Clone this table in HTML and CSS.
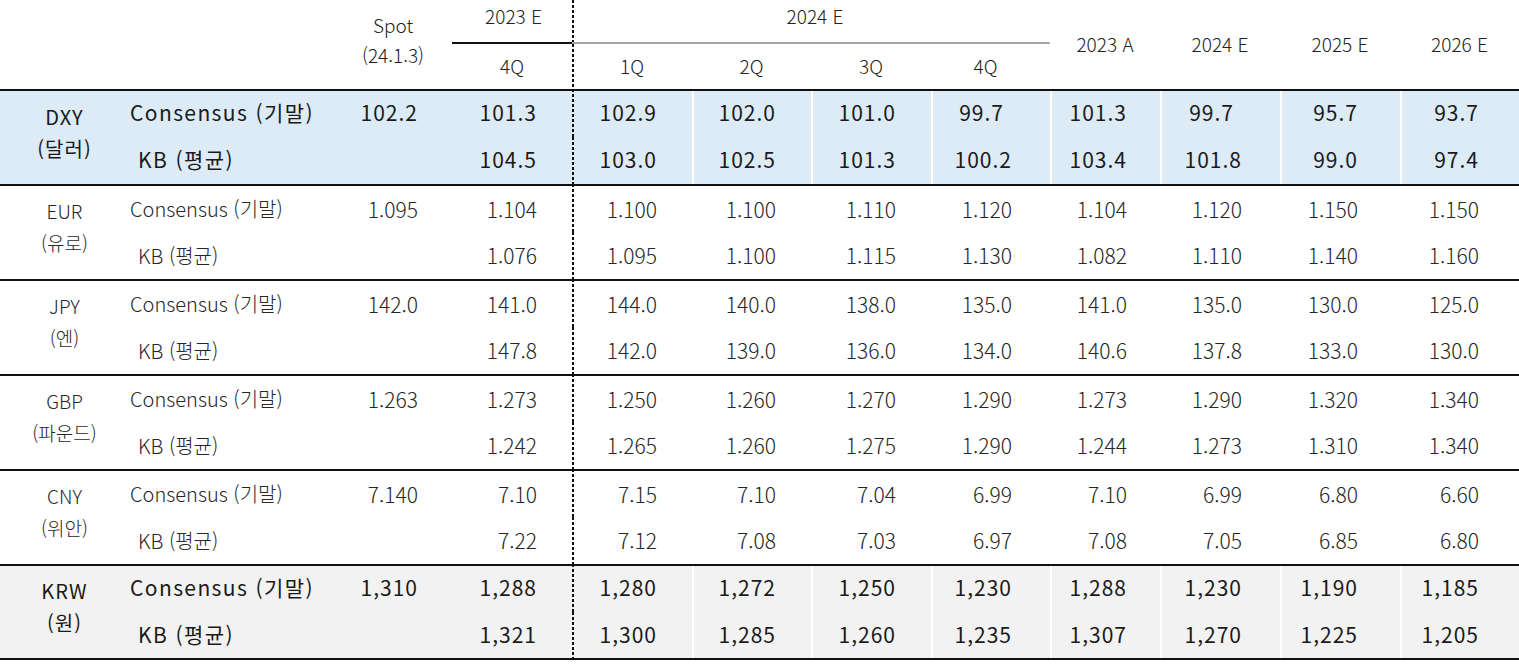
FILE: index.html
```html
<!DOCTYPE html>
<html lang="ko">
<head>
<meta charset="utf-8">
<title>환율 전망</title>
<link rel="stylesheet" href="styles.css">
</head>
<body>
<table class="fx">
  <colgroup>
    <col class="w0"><col class="w1"><col class="w2"><col class="w3"><col class="w4"><col class="w5">
    <col class="w6"><col class="w7"><col class="w8"><col class="w9"><col class="w10"><col class="w11">
  </colgroup>
  <thead>
    <tr class="h1">
      <th rowspan="2" colspan="2"></th>
      <th rowspan="2" class="spot"><span>Spot</span><span>(24.1.3)</span></th>
      <th class="y23">2023 E</th>
      <th colspan="4" class="y24 dv">2024 E</th>
      <th rowspan="2" class="yr">2023 A</th>
      <th rowspan="2" class="yr">2024 E</th>
      <th rowspan="2" class="yr">2025 E</th>
      <th rowspan="2" class="yr">2026 E</th>
    </tr>
    <tr class="h2">
      <th>4Q</th>
      <th class="dv">1Q</th>
      <th>2Q</th>
      <th>3Q</th>
      <th class="q4">4Q</th>
    </tr>
  </thead>
  <tbody class="blk band blue">
    <tr class="r1">
      <td rowspan="2" class="cur"><span>DXY</span><span>(달러)</span></td>
      <td class="lab">Consensus (기말)</td>
      <td>102.2</td><td>101.3</td><td class="dv">102.9</td><td>102.0</td><td>101.0</td><td class="sh">99.7</td>
      <td>101.3</td><td class="sh">99.7</td><td>95.7</td><td>93.7</td>
    </tr>
    <tr class="r2">
      <td class="lab kb">KB (평균)</td>
      <td></td><td>104.5</td><td class="dv">103.0</td><td>102.5</td><td>101.3</td><td>100.2</td>
      <td>103.4</td><td>101.8</td><td>99.0</td><td>97.4</td>
    </tr>
  </tbody>
  <tbody class="blk lite">
    <tr class="r1">
      <td rowspan="2" class="cur"><span>EUR</span><span>(유로)</span></td>
      <td class="lab">Consensus (기말)</td>
      <td>1.095</td><td>1.104</td><td class="dv">1.100</td><td>1.100</td><td>1.110</td><td>1.120</td>
      <td>1.104</td><td>1.120</td><td>1.150</td><td>1.150</td>
    </tr>
    <tr class="r2">
      <td class="lab kb">KB (평균)</td>
      <td></td><td>1.076</td><td class="dv">1.095</td><td>1.100</td><td>1.115</td><td>1.130</td>
      <td>1.082</td><td>1.110</td><td>1.140</td><td>1.160</td>
    </tr>
  </tbody>
  <tbody class="blk lite">
    <tr class="r1">
      <td rowspan="2" class="cur"><span>JPY</span><span>(엔)</span></td>
      <td class="lab">Consensus (기말)</td>
      <td>142.0</td><td>141.0</td><td class="dv">144.0</td><td>140.0</td><td>138.0</td><td>135.0</td>
      <td>141.0</td><td>135.0</td><td>130.0</td><td>125.0</td>
    </tr>
    <tr class="r2">
      <td class="lab kb">KB (평균)</td>
      <td></td><td>147.8</td><td class="dv">142.0</td><td>139.0</td><td>136.0</td><td>134.0</td>
      <td>140.6</td><td>137.8</td><td>133.0</td><td>130.0</td>
    </tr>
  </tbody>
  <tbody class="blk lite">
    <tr class="r1">
      <td rowspan="2" class="cur"><span>GBP</span><span>(파운드)</span></td>
      <td class="lab">Consensus (기말)</td>
      <td>1.263</td><td>1.273</td><td class="dv">1.250</td><td>1.260</td><td>1.270</td><td>1.290</td>
      <td>1.273</td><td>1.290</td><td>1.320</td><td>1.340</td>
    </tr>
    <tr class="r2">
      <td class="lab kb">KB (평균)</td>
      <td></td><td>1.242</td><td class="dv">1.265</td><td>1.260</td><td>1.275</td><td>1.290</td>
      <td>1.244</td><td>1.273</td><td>1.310</td><td>1.340</td>
    </tr>
  </tbody>
  <tbody class="blk lite">
    <tr class="r1">
      <td rowspan="2" class="cur"><span>CNY</span><span>(위안)</span></td>
      <td class="lab">Consensus (기말)</td>
      <td>7.140</td><td>7.10</td><td class="dv">7.15</td><td>7.10</td><td>7.04</td><td>6.99</td>
      <td>7.10</td><td>6.99</td><td>6.80</td><td>6.60</td>
    </tr>
    <tr class="r2">
      <td class="lab kb">KB (평균)</td>
      <td></td><td>7.22</td><td class="dv">7.12</td><td>7.08</td><td>7.03</td><td>6.97</td>
      <td>7.08</td><td>7.05</td><td>6.85</td><td>6.80</td>
    </tr>
  </tbody>
  <tbody class="blk band gray last">
    <tr class="r1">
      <td rowspan="2" class="cur"><span>KRW</span><span>(원)</span></td>
      <td class="lab">Consensus (기말)</td>
      <td>1,310</td><td>1,288</td><td class="dv">1,280</td><td>1,272</td><td>1,250</td><td>1,230</td>
      <td>1,288</td><td>1,230</td><td>1,190</td><td>1,185</td>
    </tr>
    <tr class="r2">
      <td class="lab kb">KB (평균)</td>
      <td></td><td>1,321</td><td class="dv">1,300</td><td>1,285</td><td>1,260</td><td>1,235</td>
      <td>1,307</td><td>1,270</td><td>1,225</td><td>1,205</td>
    </tr>
  </tbody>
</table>
</body>
</html>
```

FILE: styles.css
```css
html, body {
  margin: 0;
  padding: 0;
  background: #ffffff;
}

.fx {
  width: 1519px;
  table-layout: fixed;
  border-collapse: separate;
  border-spacing: 0;
  font-family: "Noto Sans CJK KR", "Noto Sans", sans-serif;
  color: #1c1c1c;
}

.w0 { width: 123px; }
.w1 { width: 211px; }
.w2 { width: 118px; }
.w3 { width: 120px; }
.w4 { width: 120px; }
.w5 { width: 119px; }
.w6 { width: 120px; }
.w7 { width: 119px; }
.w8 { width: 110px; }
.w9 { width: 120px; }
.w10 { width: 120px; }
.w11 { width: 119px; }

th, td {
  padding: 0;
  box-sizing: border-box;
}

/* header */
th {
  font-weight: 300;
  font-size: 19px;
  color: #222;
  text-align: center;
  vertical-align: middle;
  line-height: 1;
}

.h1 th { height: 44px; }
.h2 th { height: 45px; }
.h1 th.y23,
.h1 th.y24 { vertical-align: top; padding-top: 6px; }
.h1 th.y23 { border-bottom: 2px solid #111; padding-left: 3px; }
.h1 th.y24 { border-bottom: 2px solid #a6a6a6; padding-left: 8px; }
.h2 th { padding-bottom: 2px; }
.h2 th.q4 { padding-right: 10px; }

.spot span,
.cur span { display: block; }
.spot { padding-bottom: 10px; }
.spot span + span { margin-top: 11px; }
.yr { padding-bottom: 2px; }

/* dashed divider on the 1Q column's left edge */
.dv {
  background-image: repeating-linear-gradient(to bottom, #111 0 3px, transparent 3px 5px);
  background-size: 2px 100%;
  background-repeat: no-repeat;
  background-position: 0 0;
  background-origin: border-box;
}

/* body */
td {
  text-align: right;
  vertical-align: middle;
  font-size: 21px;
  font-weight: 300;
  line-height: 1;
  color: #262626;
}

.r1 td { height: 48px; border-top: 2px solid #111; padding-bottom: 4px; }
.r2 td { height: 47px; padding-bottom: 2px; }
.lite .r1 td { padding-bottom: 0; }
.lite .r2 td { padding-bottom: 0; }
.last .r2 td { border-bottom: 2px solid #111; height: 48px; }
.last td.cur { border-bottom: 2px solid #111; }

td.cur {
  text-align: center;
  padding: 0 0 10px 6px;
  font-size: 19px;
  line-height: 32px;
}
.lite td.cur { padding-bottom: 12px; }

td.lab {
  text-align: left;
  padding-left: 7px;
  font-size: 20px;
}
td.lab.kb { padding-left: 15px; }

/* numeric column right paddings */
.r1 td:nth-child(3),  .r2 td:nth-child(2)  { padding-right: 34px; }
.r1 td:nth-child(4),  .r2 td:nth-child(3)  { padding-right: 35px; }
.r1 td:nth-child(5),  .r2 td:nth-child(4)  { padding-right: 35px; }
.r1 td:nth-child(6),  .r2 td:nth-child(5)  { padding-right: 35px; }
.r1 td:nth-child(7),  .r2 td:nth-child(6)  { padding-right: 35px; }
.r1 td:nth-child(8),  .r2 td:nth-child(7)  { padding-right: 38px; }
.r1 td:nth-child(9),  .r2 td:nth-child(8)  { padding-right: 33px; }
.r1 td:nth-child(10), .r2 td:nth-child(9)  { padding-right: 38px; }
.r1 td:nth-child(11), .r2 td:nth-child(10) { padding-right: 42px; }
.r1 td:nth-child(12), .r2 td:nth-child(11) { padding-right: 40px; }

/* highlighted bands */
.band td {
  font-weight: 400;
  font-size: 21px;
  letter-spacing: 1px;
  color: #1a1a1a;
}
.band td.lab { font-size: 21px; letter-spacing: 1.4px; }
.band td.cur { font-size: 20px; letter-spacing: 1px; }
.blue td { background-color: #ddebf7; }
.gray td { background-color: #f2f2f2; }
.band td:nth-last-child(-n+7) { box-shadow: inset 2px 0 0 #ffffff; }
.band .r1 td.sh { padding-right: 46px; }
```
